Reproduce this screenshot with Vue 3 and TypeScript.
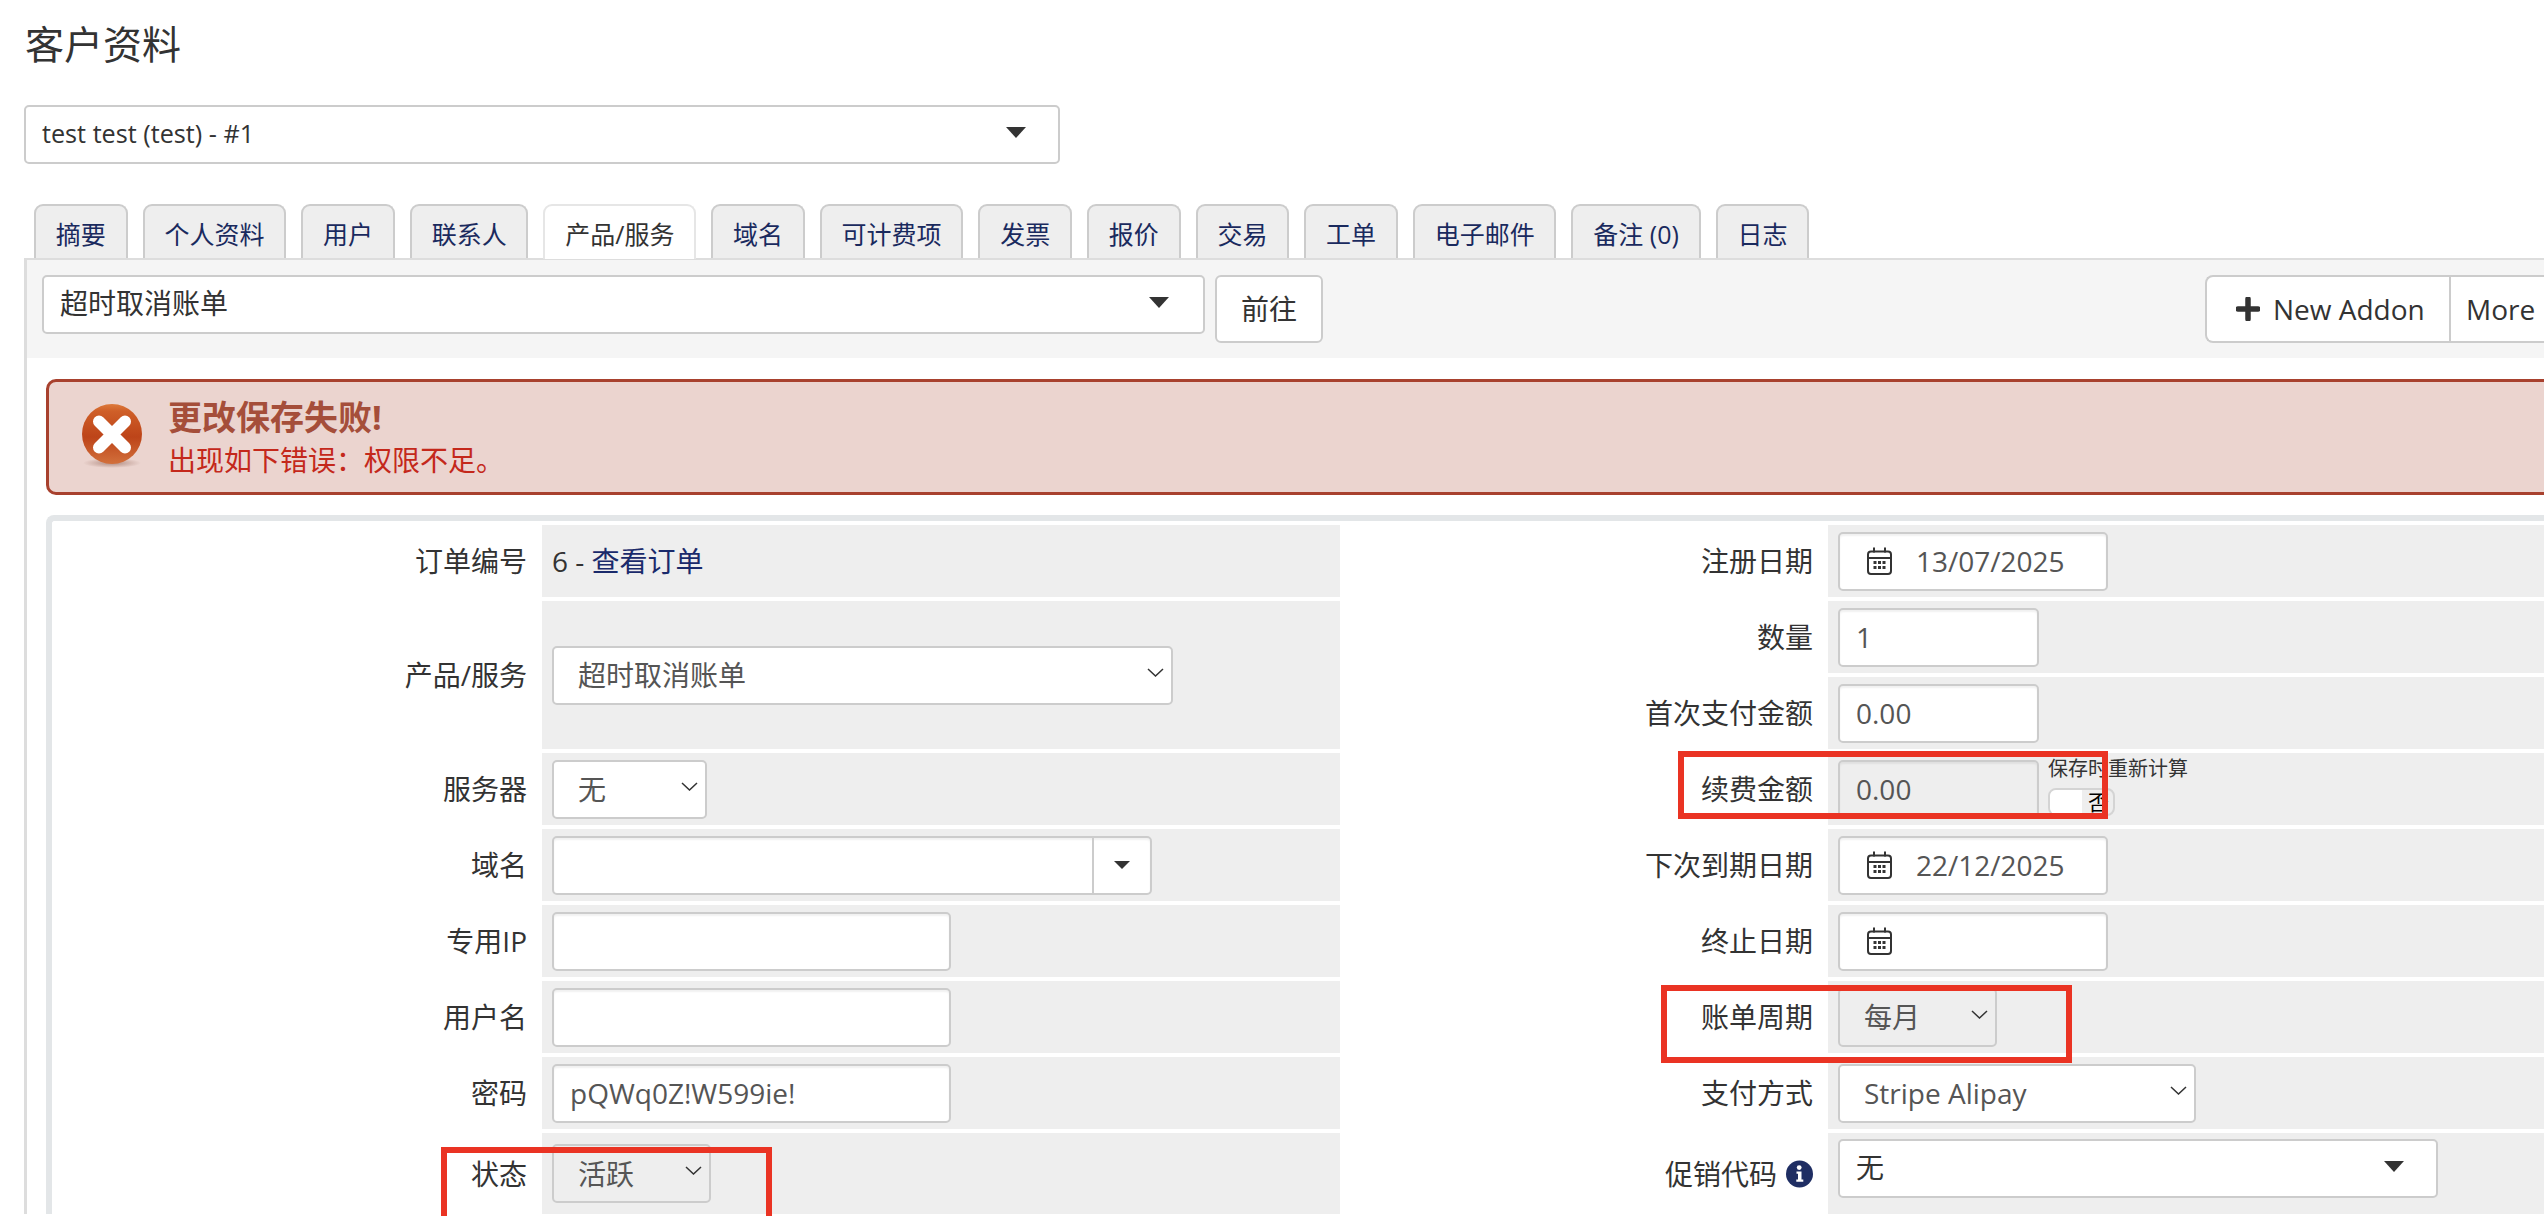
<script setup lang="ts">
const tabs: string[] = ['摘要', '个人资料', '用户', '联系人', '产品/服务', '域名', '可计费项', '发票', '报价', '交易', '工单', '电子邮件', '备注 (0)', '日志']
const activeTab = '产品/服务'
</script>

<template>
  <div class="page">
    <h1 class="title">客户资料</h1>

    <div class="select2 client">
      <span>test test (test) - #1</span>
      <i class="tri"></i>
    </div>

    <nav class="tabs">
      <a v-for="t in tabs" :key="t" class="tab" :class="{ active: t === activeTab }">{{ t }}</a>
    </nav>

    <section class="panel">
      <div class="toolbar">
        <div class="select2 product">
          <span>超时取消账单</span>
          <i class="tri"></i>
        </div>
        <button class="btn go">前往</button>
        <div class="btn-group">
          <button class="btn addon">
            <svg width="24" height="24" viewBox="0 0 24 24"><path d="M12 2v20M2 12h20" stroke="#333" stroke-width="5.5" stroke-linecap="round" fill="none" /></svg>
            New Addon
          </button>
          <button class="btn more">More</button>
        </div>
      </div>

      <div class="alert">
        <svg class="alert-icon" width="62" height="66" viewBox="0 0 62 66">
          <defs>
            <linearGradient id="ball" x1="0" y1="0" x2="0" y2="1">
              <stop offset="0%" stop-color="#dd7a3c" />
              <stop offset="12%" stop-color="#cf5f28" />
              <stop offset="55%" stop-color="#bd4419" />
              <stop offset="100%" stop-color="#d2703c" />
            </linearGradient>
            <radialGradient id="shade" cx="50%" cy="50%" r="50%">
              <stop offset="0%" stop-color="#8a5a4c" stop-opacity=".6" />
              <stop offset="100%" stop-color="#8a5a4c" stop-opacity="0" />
            </radialGradient>
          </defs>
          <ellipse cx="31" cy="59" rx="29" ry="5" fill="url(#shade)" />
          <circle cx="31" cy="30" r="30" fill="url(#ball)" />
          <path d="M18 17.5L44 43.5M44 17.5L18 43.5" stroke="#fff" stroke-width="12" stroke-linecap="round" fill="none" />
        </svg>
        <div>
          <h2 class="alert-head">更改保存失败!</h2>
          <p class="alert-text">出现如下错误：权限不足。</p>
        </div>
      </div>

      <div class="form-box">
        <div class="form-grid">
          <div class="lab">订单编号</div>
          <div class="val">6 -&nbsp;<a class="link">查看订单</a></div>
          <div class="lab">注册日期</div>
          <div class="val">
            <div class="ctl date">
              <svg class="cal" width="25" height="28" viewBox="0 0 25 28"><rect x="1" y="4.5" width="23" height="22.5" rx="3" fill="none" stroke="#333" stroke-width="2" /><path d="M1 11h23M7 0.5v5M18 0.5v5" fill="none" stroke="#333" stroke-width="2" /><path d="M6.5 14h3v3h-3zM11 14h3v3h-3zM15.5 14h3v3h-3zM6.5 19h3v3h-3zM11 19h3v3h-3zM15.5 19h3v3h-3z" fill="#333" /></svg>
              <span>13/07/2025</span>
            </div>
          </div>

          <div class="lab span2">产品/服务</div>
          <div class="val span2">
            <div class="ctl sel w-product"><span>超时取消账单</span><svg class="chev" width="17" height="9" viewBox="0 0 17 9"><path d="M1 1l7.5 7L16 1" fill="none" stroke="#333" stroke-width="1.5" /></svg></div>
          </div>
          <div class="lab">数量</div>
          <div class="val"><input class="ctl w-num" value="1" /></div>
          <div class="lab">首次支付金额</div>
          <div class="val"><input class="ctl w-num" value="0.00" /></div>

          <div class="lab">服务器</div>
          <div class="val">
            <div class="ctl sel w-server"><span>无</span><svg class="chev" width="17" height="9" viewBox="0 0 17 9"><path d="M1 1l7.5 7L16 1" fill="none" stroke="#333" stroke-width="1.5" /></svg></div>
          </div>
          <div class="lab">续费金额</div>
          <div class="val renew">
            <input class="ctl w-num off" value="0.00" readonly />
            <div class="recalc">
              <span class="recalc-label">保存时重新计算</span>
              <span class="switch"><b class="handle"></b><span class="no">否</span></span>
            </div>
          </div>

          <div class="lab">域名</div>
          <div class="val">
            <div class="ctl domain"><input class="domain-input" /><span class="domain-btn"><i class="tri small"></i></span></div>
          </div>
          <div class="lab">下次到期日期</div>
          <div class="val">
            <div class="ctl date">
              <svg class="cal" width="25" height="28" viewBox="0 0 25 28"><rect x="1" y="4.5" width="23" height="22.5" rx="3" fill="none" stroke="#333" stroke-width="2" /><path d="M1 11h23M7 0.5v5M18 0.5v5" fill="none" stroke="#333" stroke-width="2" /><path d="M6.5 14h3v3h-3zM11 14h3v3h-3zM15.5 14h3v3h-3zM6.5 19h3v3h-3zM11 19h3v3h-3zM15.5 19h3v3h-3z" fill="#333" /></svg>
              <span>22/12/2025</span>
            </div>
          </div>

          <div class="lab">专用IP</div>
          <div class="val"><input class="ctl w-text" /></div>
          <div class="lab">终止日期</div>
          <div class="val">
            <div class="ctl date">
              <svg class="cal" width="25" height="28" viewBox="0 0 25 28"><rect x="1" y="4.5" width="23" height="22.5" rx="3" fill="none" stroke="#333" stroke-width="2" /><path d="M1 11h23M7 0.5v5M18 0.5v5" fill="none" stroke="#333" stroke-width="2" /><path d="M6.5 14h3v3h-3zM11 14h3v3h-3zM15.5 14h3v3h-3zM6.5 19h3v3h-3zM11 19h3v3h-3zM15.5 19h3v3h-3z" fill="#333" /></svg>
            </div>
          </div>

          <div class="lab">用户名</div>
          <div class="val"><input class="ctl w-text" /></div>
          <div class="lab">账单周期</div>
          <div class="val">
            <div class="ctl sel off w-cycle"><span>每月</span><svg class="chev" width="17" height="9" viewBox="0 0 17 9"><path d="M1 1l7.5 7L16 1" fill="none" stroke="#333" stroke-width="1.5" /></svg></div>
          </div>

          <div class="lab">密码</div>
          <div class="val"><input class="ctl w-text" value="pQWq0Z!W599ie!" /></div>
          <div class="lab">支付方式</div>
          <div class="val">
            <div class="ctl sel w-pay"><span>Stripe Alipay</span><svg class="chev" width="17" height="9" viewBox="0 0 17 9"><path d="M1 1l7.5 7L16 1" fill="none" stroke="#333" stroke-width="1.5" /></svg></div>
          </div>

          <div class="lab">状态</div>
          <div class="val">
            <div class="ctl sel off w-status"><span>活跃</span><svg class="chev" width="17" height="9" viewBox="0 0 17 9"><path d="M1 1l7.5 7L16 1" fill="none" stroke="#333" stroke-width="1.5" /></svg></div>
          </div>
          <div class="lab">促销代码
            <svg class="info" width="27" height="28" viewBox="0 0 27 28"><circle cx="13.5" cy="14" r="13.5" fill="#1f2e63" /><path d="M10.5 11.5h5v8h1.8v2.3h-7v-2.3h1.7v-5.7h-1.5z" fill="#fff" /><circle cx="13.2" cy="7.6" r="2.4" fill="#fff" /></svg>
          </div>
          <div class="val top">
            <div class="select2 promo"><span>无</span><i class="tri"></i></div>
          </div>
        </div>
      </div>
    </section>

    <div class="mark mark-status"></div>
    <div class="mark mark-renew"></div>
    <div class="mark mark-cycle"></div>
  </div>
</template>

<style>
html, body { margin: 0; background: #fff; overflow: hidden; }
</style>

<style scoped>
.page {
  position: relative;
  width: 2544px;
  height: 1216px;
  overflow: hidden;
  box-sizing: border-box;
  padding: 19px 0 0 24px;
  font-family: "Open Sans", "Noto Sans CJK SC", sans-serif;
  font-size: 28px;
  line-height: 40px;
  color: #333;
  background: #fff;
}
.title { margin: 0 0 37px 1px; font-size: 39px; line-height: 49px; font-weight: 400; color: #333; }
.select2 {
  display: flex;
  align-items: center;
  justify-content: space-between;
  box-sizing: border-box;
  height: 59px;
  border: 2px solid #ccc;
  border-radius: 5px;
  background: #fff;
  padding: 0 32px 4px 16px;
}
.client { width: 1036px; font-size: 25.2px; }
.tri { display: block; width: 0; height: 0; border-left: 10px solid transparent; border-right: 10px solid transparent; border-top: 11px solid #333; }
.tri.small { border-left-width: 8px; border-right-width: 8px; border-top-width: 8px; }

.tabs { display: flex; gap: 15px; margin: 40px 0 0 10px; }
.tab {
  box-sizing: border-box;
  height: 54px;
  padding: 8px 19.8px 0;
  border: 2px solid #ccc;
  border-bottom: 0;
  border-radius: 9px 9px 0 0;
  background: #eee;
  color: #1a2a5e;
  font-size: 25px;
  line-height: 40px;
  white-space: nowrap;
}
.tab.active { background: #fff; color: #333; border-color: #e6e6e6; position: relative; z-index: 1; height: 55px; margin-bottom: -1px; }

.panel { width: 2600px; border-top: 2px solid #ddd; border-left: 3px solid #ddd; }
.toolbar {
  display: flex;
  align-items: flex-start;
  height: 98px;
  box-sizing: border-box;
  background: #f5f5f5;
  padding: 15px 46px 0 15px;
}
.product { width: 1163px; padding-right: 34px; }
.btn {
  box-sizing: border-box;
  height: 68px;
  border: 2px solid #ccc;
  background: #fff;
  color: #333;
  font: inherit;
  font-size: 28px;
  padding: 0;
}
.go { width: 108px; margin-left: 10px; border-radius: 6px; }
.btn-group { display: flex; margin-left: auto; }
.addon { display: flex; align-items: center; gap: 13px; width: 244px; padding-left: 29px; border-radius: 8px 0 0 8px; border-right: 0; }
.more { width: 132px; border-radius: 0 8px 8px 0; text-align: left; padding-left: 15px; }

.alert {
  display: flex;
  align-items: flex-start;
  gap: 25px;
  box-sizing: border-box;
  width: 2560px;
  height: 116px;
  margin: 21px 0 20px 19px;
  padding: 22px 0 0 32px;
  background: #ebd4cf;
  border: 3px solid #a8412e;
  border-radius: 10px;
}
.alert-icon { flex: none; }
.alert-head { margin: -9px 0 3px; font-size: 34px; line-height: 44px; font-weight: 700; color: #a54e3a; }
.alert-text { margin: 0; font-size: 28px; line-height: 36px; color: #c4281b; }

.form-box {
  box-sizing: border-box;
  width: 2560px;
  margin-left: 19px;
  border: 6px solid #e3e6e8;
  border-right: 0;
  border-bottom: 0;
  border-radius: 8px 0 0 0;
  padding-top: 4px;
}
.form-grid {
  display: grid;
  grid-template-columns: 490px 798px 488px 780px;
  grid-template-rows: repeat(8, 72px) 81px;
  row-gap: 4px;
}
.lab { display: flex; align-items: center; justify-content: flex-end; gap: 9px; padding-right: 15px; white-space: nowrap; }
.val { display: flex; align-items: center; box-sizing: border-box; padding-left: 10px; background: #eee; }
.val.top { align-items: flex-start; padding-top: 6px; }
.span2 { grid-row: span 2; }
.link { color: #1a2a6b; }

.ctl {
  box-sizing: border-box;
  height: 59px;
  border: 2px solid #ccc;
  border-radius: 5px;
  background: #fff;
  box-shadow: inset 0 2px 2px rgba(0, 0, 0, .06);
  color: #555;
  font: inherit;
  font-size: 28px;
  padding: 0 0 0 16px;
  outline: none;
}
.ctl.off { background: #eee; }
.sel { display: flex; align-items: center; justify-content: space-between; padding: 0 7px 0 24px; box-shadow: none; }
.chev { flex: none; margin-bottom: 6px; }
.w-product { width: 621px; }
.w-server { width: 155px; }
.w-status { width: 159px; }
.w-cycle { width: 159px; }
.w-pay { width: 358px; }
.w-num { width: 201px; }
.w-text { width: 399px; }
.date { display: flex; align-items: center; gap: 24px; width: 270px; padding-left: 27px; }
.cal { flex: none; }
.domain { display: flex; width: 600px; padding: 0; overflow: hidden; }
.domain-input { flex: 1; min-width: 0; border: 0; background: transparent; outline: none; }
.domain-btn { display: flex; align-items: center; justify-content: center; width: 56px; border-left: 2px solid #ccc; }
.promo { width: 600px; }

.renew { gap: 9px; }
.recalc { display: flex; flex-direction: column; align-self: flex-start; padding-top: 4px; }
.recalc-label { font-size: 20px; line-height: 24px; color: #333; white-space: nowrap; }
.switch { display: flex; box-sizing: border-box; width: 67px; height: 28px; margin-top: 7px; border: 2px solid #d4d4d4; border-radius: 8px; overflow: hidden; }
.handle { width: 32px; flex: none; background: #fff; }
.no { padding-left: 6px; font-size: 21px; line-height: 24px; color: #000; }
.info { flex: none; }

.mark { position: absolute; box-sizing: border-box; border: 6px solid #ea3323; pointer-events: none; }
.mark-status { left: 441px; top: 1147px; width: 331px; height: 90px; }
.mark-renew { left: 1678px; top: 751px; width: 430px; height: 68px; }
.mark-cycle { left: 1661px; top: 985px; width: 411px; height: 78px; }
</style>
